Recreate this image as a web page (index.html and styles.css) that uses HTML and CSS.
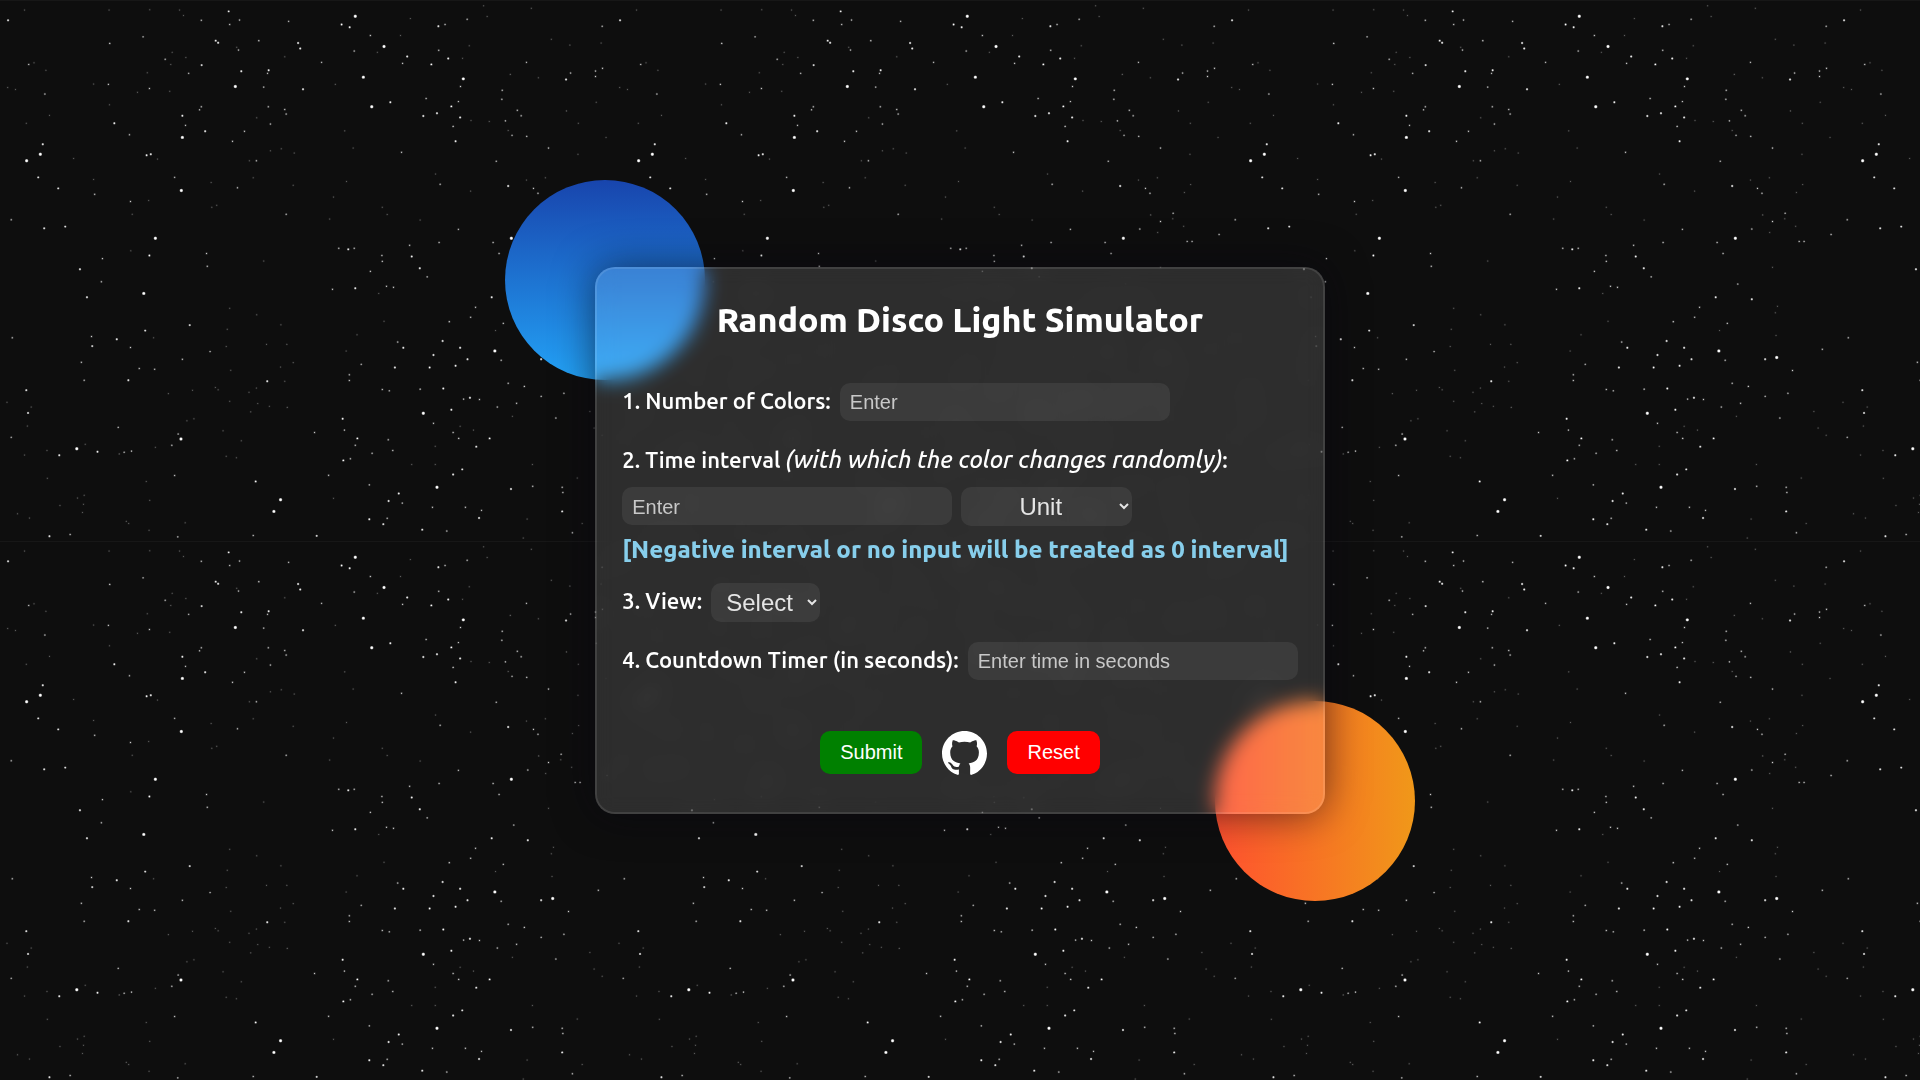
FILE: index.html
```html
<!DOCTYPE html>
<html lang="en">
<head>
<meta charset="utf-8">
<meta name="viewport" content="width=device-width, initial-scale=1">
<title>Random Disco Light Simulator</title>
<link rel="stylesheet" href="styles.css">
</head>
<body>
<svg class="sky" aria-hidden="true">
  <defs>
    <path id="stars-big" d="M1013 47h0M1095 135h0M1321 229h0M671 251h0M1060 310h0M520 399h0M517 553h0M443 692h0M1458 692h0M410 852h0M516 1275h0M219 1303h0M1207 1200h0M1246 1415h0M800 1451h0M781 1485h0M1576 1038h0M1411 1019h0M1036 224h0M76 467h0M115 448h0"/>
    <path id="stars-bright" d="M23 59h0M652 33h0M974 71h0M997 79h0M1250 76h0M615 118h0M622 124h0M850 125h0M856 141h0M575 189h0M688 207h0M766 204h0M864 259h0M1161 164h0M1278 170h0M1230 187h0M1287 309h0M1113 297h0M1207 337h0M1246 329h0M1312 341h0M1299 410h0M520 336h0M585 381h0M326 358h0M122 419h0M109 515h0M418 451h0M430 448h0M166 547h0M126 663h0M186 658h0M228 782h0M248 863h0M426 742h0M1449 540h0M993 724h0M1174 745h0M1197 779h0M1013 837h0M1402 863h0M1505 869h0M414 960h0M541 944h0M263 1005h0M333 985h0M366 1104h0M75 1133h0M80 1199h0M762 1107h0M1150 1010h0M1262 990h0M1312 1010h0M1236 1031h0M1333 1043h0M1225 1067h0M1126 1067h0M1299 1062h0M1264 1128h0M1287 1190h0M977 1216h0M1019 1273h0M1396 1273h0M1358 1297h0M979 1337h0M1318 1363h0M1292 1378h0M729 1398h0M1137 1433h0M1108 1455h0M1457 1420h0M1053 1508h0M1093 1522h0M1366 1504h0M1204 1538h0M903 1556h0M141 1557h0M278 1312h0M169 1322h0M1614 231h0M1603 1485h0M1340 1155h0M1543 1043h0"/>
    <path id="stars-mid" d="M574 59h0M655 71h0M683 58h0M823 62h0M1269 71h0M1332 56h0M1056 103h0M1251 146h0M738 118h0M680 145h0M917 181h0M1010 148h0M1148 184h0M763 213h0M752 253h0M574 310h0M569 319h0M529 364h0M697 381h0M663 410h0M765 310h0M771 360h0M812 318h0M816 331h0M82 187h0M128 273h0M471 172h0M538 213h0M426 257h0M309 245h0M408 107h0M313 126h0M1215 286h0M1307 295h0M1313 251h0M1292 367h0M1431 288h0M1432 262h0M1475 320h0M1486 336h0M1460 393h0M1441 351h0M1502 396h0M1501 181h0M1564 430h0M1415 468h0M1145 442h0M1255 535h0M1521 547h0M1534 561h0M369 391h0M498 515h0M270 564h0M372 585h0M32 638h0M292 751h0M289 818h0M589 736h0M591 773h0M677 545h0M816 622h0M1307 666h0M1168 712h0M1252 704h0M1406 704h0M1423 736h0M966 721h0M1010 721h0M1089 742h0M1090 759h0M1056 788h0M1218 804h0M948 840h0M1102 831h0M1122 834h0M1356 892h0M1342 921h0M1435 939h0M1281 934h0M1505 665h0M1564 643h0M1465 825h0M35 981h0M261 977h0M372 1009h0M232 1052h0M240 1104h0M397 1070h0M441 1072h0M520 1043h0M599 1021h0M1134 993h0M1030 1058h0M1429 1046h0M996 1088h0M996 1105h0M1090 1131h0M1110 1135h0M1198 1130h0M1449 1113h0M1495 1122h0M1543 1151h0M1322 1159h0M1367 1160h0M1418 1182h0M1473 1171h0M1236 1229h0M1292 1256h0M1308 1273h0M982 1249h0M1107 1277h0M1013 1293h0M897 1256h0M1061 1316h0M1120 1308h0M999 1332h0M337 1241h0M508 1260h0M490 1293h0M354 1313h0M375 1310h0M32 1270h0M498 1381h0M937 1380h0M1053 1408h0M1233 1473h0M1327 1473h0M1373 1482h0M1104 1505h0M1147 1461h0M1274 1542h0M200 1552h0M722 1555h0M507 1559h0M1519 1412h0M1717 76h0M1627 212h0M1698 206h0M1698 222h0M1718 198h0M1600 619h0M1731 681h0M1640 701h0M1654 701h0M1706 1014h0M1621 1076h0M1608 1142h0M1585 1214h0M1603 1415h0M1605 1430h0M1632 1547h0M731 467h0"/>
    <path id="stars-dim" d="M70 29h0M311 29h0M427 28h0M512 29h0M523 45h0M1170 54h0M1389 48h0M1379 17h0M1515 24h0M1142 103h0M1338 133h0M1076 152h0M1319 169h0M1455 216h0M1535 226h0M491 152h0M530 167h0M487 187h0M675 137h0M812 165h0M97 182h0M131 204h0M22 254h0M44 260h0M267 244h0M420 211h0M392 268h0M484 265h0M956 245h0M312 304h0M141 335h0M75 358h0M732 342h0M771 438h0M802 432h0M839 444h0M711 467h0M722 516h0M602 530h0M836 538h0M983 380h0M1007 430h0M1343 350h0M1395 353h0M1449 379h0M1242 505h0M1342 555h0M1501 523h0M1555 516h0M988 527h0M951 572h0M1104 623h0M1090 602h0M1198 639h0M940 636h0M210 460h0M449 462h0M267 521h0M424 582h0M377 622h0M604 602h0M618 596h0M373 728h0M752 758h0M655 895h0M732 914h0M648 956h0M801 943h0M760 1000h0M818 1000h0M645 1006h0M836 1053h0M800 1066h0M658 1075h0M438 981h0M1095 933h0M1413 960h0M1018 972h0M987 1019h0M1080 852h0M1536 624h0M1556 675h0M1564 776h0M480 1143h0M549 1133h0M614 1125h0M622 1132h0M710 1139h0M731 1127h0M812 1107h0M655 1165h0M735 1172h0M768 1180h0M819 1183h0M715 1196h0M553 1216h0M533 1222h0M636 1251h0M688 1280h0M645 1325h0M674 1329h0M89 1182h0M20 1168h0M78 1237h0M70 1321h0M134 1308h0M243 1290h0M340 1318h0M443 1299h0M135 1389h0M417 1398h0M240 1438h0M221 1446h0M238 1464h0M427 1453h0M171 1468h0M235 1488h0M50 1492h0M84 1504h0M360 1514h0M367 1520h0M528 1518h0M425 1540h0M951 1447h0M1312 1238h0M1350 1249h0M1461 1209h0M1241 1296h0M1174 1349h0M1241 1349h0M1518 1349h0M1503 1507h0M1492 1562h0M1572 114h0M1625 131h0M1714 125h0M1700 297h0M1615 322h0M1649 358h0M1728 399h0M1648 448h0M1650 536h0M1632 559h0M1599 635h0M1630 657h0M1578 889h0M1572 908h0M1574 974h0M1682 1195h0M1694 1243h0M1717 1264h0M1646 1388h0M1660 1520h0"/>
    <pattern id="star-tile" width="612" height="541" patternUnits="userSpaceOnUse" viewBox="0 0 1745 1571" preserveAspectRatio="none">
      <rect class="seam" width="1745" height="3"/>
      <g class="stars">
        <use href="#stars-dim" class="glow dim"/>
        <use href="#stars-dim" class="core dim"/>
        <use href="#stars-mid" class="glow mid"/>
        <use href="#stars-mid" class="core mid"/>
        <use href="#stars-bright" class="glow bright"/>
        <use href="#stars-bright" class="core bright"/>
        <use href="#stars-big" class="glow big"/>
        <use href="#stars-big" class="core big"/>
      </g>
    </pattern>
  </defs>
  <rect width="100%" height="100%" fill="url(#star-tile)"/>
</svg>

<main class="scene">
  <div class="planet planet-blue"></div>
  <div class="planet planet-orange"></div>
  <form class="card">
    <h1>Random Disco Light Simulator</h1>

    <div class="row">
      <label for="colors">1. Number of Colors:</label>
      <input class="field" id="colors" type="text" inputmode="numeric" placeholder="Enter">
    </div>

    <div class="group">
      <label for="interval">2. Time interval <em>(with which the color changes randomly)</em>:</label>
      <div class="row">
        <input class="field" id="interval" type="text" inputmode="numeric" placeholder="Enter">
        <select class="picker picker-unit" aria-label="Unit"><option>Unit</option><option>Seconds</option><option>Milliseconds</option></select>
      </div>
      <p class="note">[Negative interval or no input will be treated as 0 interval]</p>
    </div>

    <div class="row">
      <label for="view">3. View:</label>
      <select class="picker picker-view" id="view"><option>Select</option><option>Full</option><option>Grid</option></select>
    </div>

    <div class="row">
      <label for="timer">4. Countdown Timer (in seconds):</label>
      <input class="field" id="timer" type="text" inputmode="numeric" placeholder="Enter time in seconds">
    </div>

    <div class="actions">
      <button class="btn submit" type="submit">Submit</button>
      <a class="github" href="#" aria-label="GitHub">
        <svg viewBox="0 0 16 16" width="45" height="45"><path fill="#fff" d="M8 0C3.58 0 0 3.58 0 8c0 3.54 2.29 6.53 5.47 7.59.4.07.55-.17.55-.38 0-.19-.01-.82-.01-1.49-2.01.37-2.53-.49-2.69-.94-.09-.23-.48-.94-.82-1.13-.28-.15-.68-.52-.01-.53.63-.01 1.08.58 1.23.82.72 1.21 1.87.87 2.33.66.07-.52.28-.87.51-1.07-1.78-.2-3.64-.89-3.64-3.95 0-.87.31-1.59.82-2.15-.08-.2-.36-1.02.08-2.12 0 0 .67-.21 2.2.82.64-.18 1.32-.27 2-.27s1.36.09 2 .27c1.53-1.04 2.2-.82 2.2-.82.44 1.1.16 1.92.08 2.12.51.56.82 1.27.82 2.15 0 3.07-1.87 3.75-3.65 3.95.29.25.54.73.54 1.48 0 1.07-.01 1.93-.01 2.2 0 .21.15.46.55.38A8.013 8.013 0 0 0 16 8c0-4.42-3.58-8-8-8z"/></svg>
      </a>
      <button class="btn reset" type="reset">Reset</button>
    </div>
  </form>
</main>
</body>
</html>
```
FILE: styles.css
```css
* {
  box-sizing: border-box;
}

body {
  margin: 0;
  min-height: 100vh;
  display: grid;
  place-items: center;
  background: #0e0e0e;
  color: #fff;
  font-family: "Ubuntu Sans", Ubuntu, "Noto Sans", sans-serif;
}

/* Tiled star field behind everything */
.sky {
  position: fixed;
  inset: 0;
  width: 100%;
  height: 100%;
}

.seam { fill: #171717; }
.stars { fill: none; stroke-linecap: round; }
.core { stroke-width: 4; }
.core.dim { stroke: #6c6c6c; stroke-width: 3; }
.core.mid { stroke: #f0f0f0; stroke-width: 3; }
.core.bright { stroke: #fff; }
.core.big { stroke: #fff; stroke-width: 7; }
.glow { stroke-width: 7; }
.glow.dim { stroke: #1c1c1c; }
.glow.mid { stroke: #404040; }
.glow.bright { stroke: #808080; }
.glow.big { stroke: #8c8c8c; stroke-width: 10; }

.scene {
  position: relative;
  padding: 87px 90px;
}

.planet {
  position: absolute;
  width: 200px;
  height: 200px;
  border-radius: 50%;
}

.planet-blue {
  top: 0;
  left: 0;
  background: linear-gradient(#1845ad, #23a2f6);
}

.planet-orange {
  right: 0;
  bottom: 0;
  background: linear-gradient(to right, #ff512f, #f09819);
}

.card {
  position: relative;
  display: flex;
  flex-direction: column;
  gap: 20px;
  padding: 32px 25px 36px;
  border: 2px solid rgba(255, 255, 255, 0.1);
  border-radius: 20px;
  background: rgba(255, 255, 255, 0.13);
  backdrop-filter: blur(10px);
  box-shadow: 0 0 40px rgba(8, 7, 16, 0.6);
}

h1 {
  margin: 0 0 22px;
  font-size: 34px;
  line-height: 40px;
  font-weight: 800;
  text-align: center;
}

label {
  font-size: 22px;
  line-height: 38px;
  font-weight: 600;
}

em {
  font-size: 24px;
  font-weight: 500;
}

.row {
  display: flex;
  align-items: center;
  gap: 9px;
}

.group {
  display: flex;
  flex-direction: column;
  gap: 7px;
}

.field,
.picker {
  border: 0;
  border-radius: 10px;
  background: rgba(255, 255, 255, 0.07);
  color: #e5e5e5;
  font-family: "Liberation Sans", Arial, sans-serif;
}

.field {
  width: 330px;
  height: 38px;
  padding: 2px 10px 0;
  font-size: 20px;
}

.field::placeholder {
  color: #c8c8c8;
}

.picker {
  height: 39px;
  font-size: 24px;
  text-align: center;
}

.picker option {
  color: #000;
}

.picker-unit { width: 171px; }
.picker-view { width: 109px; }

.note {
  margin: 3px 0 0;
  color: #87ceeb;
  font-size: 24px;
  line-height: 27px;
  font-weight: 800;
}

.actions {
  display: flex;
  justify-content: center;
  gap: 20px;
  margin-top: 31px;
}

.btn {
  height: 43px;
  padding: 0 20px;
  border: 0;
  border-radius: 10px;
  color: #fff;
  font-family: "Liberation Sans", Arial, sans-serif;
  font-size: 20px;
}

.submit { background: #008000; }
.reset { background: #f00; }

.github svg {
  display: block;
}
```
